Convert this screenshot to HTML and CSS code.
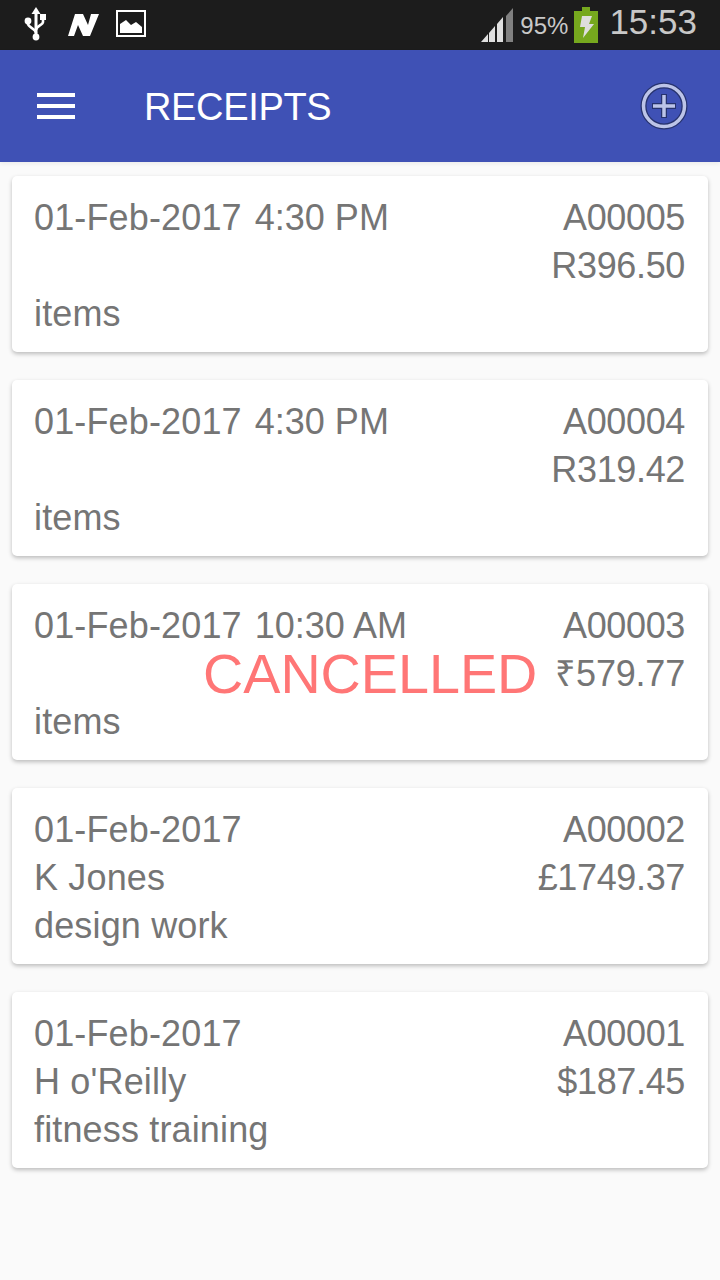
FILE: index.html
```html
<!DOCTYPE html>
<html lang="en">
  <head>
    <meta charset="UTF-8" />
    <meta name="viewport" content="width=device-width, initial-scale=1.0" />
    <title>Receipts</title>
    <link rel="stylesheet" href="styles.css">
  </head>
  <body>
    <div class="status-bar">
      <svg class="icon-usb" width="24" height="36" viewBox="0 0 24 36">
        <path d="M12 30V4" stroke="#fff" stroke-width="3" fill="none"/>
        <path d="M12 0l4.500 7h-9z" fill="#fff"/>
        <path d="M4 14v3c0 3 8 5 8 9M19 10v5c0 3-7 4-7 8" stroke="#fff" stroke-width="2.600" fill="none"/>
        <circle cx="4" cy="14" r="3.400" fill="#fff"/>
        <rect x="16" y="7" width="6" height="6" fill="#fff"/>
        <circle cx="12" cy="30" r="3.400" fill="#fff"/>
      </svg>
      <svg class="icon-n" width="32" height="24" viewBox="0 0 32 24">
        <path d="M7 1h8l5 11 3-11h8l-9 22h-7l-5-11-4 11H0z" fill="#fff"/>
      </svg>
      <svg class="icon-pic" width="31" height="28" viewBox="0 0 31 28">
        <rect x="1" y="1" width="28" height="25" fill="none" stroke="#fff" stroke-width="2"/>
        <path d="M4 23v-9l6-4 5 5 5-3 6 5v6z" fill="#fff"/>
      </svg>
      <div class="status-right">
        <svg class="signal" width="34" height="36" viewBox="0 0 34 36">
          <path d="M1 34l7-8v8z" fill="#e0e0e0"/>
          <path d="M9 25l6-7v16H9z" fill="#e0e0e0"/>
          <path d="M17 16l6-7v25h-6z" fill="#e0e0e0"/>
          <path d="M26 8l7-8v34h-7z" fill="#808080"/>
        </svg>
        <span class="battery-text">95%</span>
        <svg width="24" height="36" viewBox="0 0 24 36">
          <path d="M8 0h8v4h8v32H0V4h8z" fill="#76a81e"/>
          <path d="M8 9h10l-3 8h5L9 31l2-11H6z" fill="#dedede"/>
        </svg>
        <span class="clock">15:53</span>
      </div>
    </div>

    <div class="app-bar">
      <div class="menu-btn">
        <span></span>
        <span></span>
        <span></span>
      </div>
      <h1>RECEIPTS</h1>
      <svg class="add-btn" width="48" height="48" viewBox="0 0 48 48">
        <circle cx="24" cy="24" r="20.500" fill="none" stroke="#27336f" stroke-width="6"/>
        <path d="M24 12v24M12 24h24" stroke="#27336f" stroke-width="6"/>
        <circle cx="24" cy="24" r="20.500" fill="none" stroke="#bcc4e8" stroke-width="3.500"/>
        <path d="M24 13v22M13 24h22" stroke="#bcc4e8" stroke-width="3.500"/>
      </svg>
    </div>

    <div class="list">
      <div class="card">
        <div class="row">
          <span class="date">01-Feb-2017</span>
          <span class="time">4:30 PM</span>
          <span class="right">A00005</span>
        </div>
        <div class="row">
          <span class="right">R396.50</span>
        </div>
        <div class="row">items</div>
      </div>

      <div class="card">
        <div class="row">
          <span class="date">01-Feb-2017</span>
          <span class="time">4:30 PM</span>
          <span class="right">A00004</span>
        </div>
        <div class="row">
          <span class="right">R319.42</span>
        </div>
        <div class="row">items</div>
      </div>

      <div class="card">
        <div class="row">
          <span class="date">01-Feb-2017</span>
          <span class="time">10:30 AM</span>
          <span class="right">A00003</span>
        </div>
        <div class="row">
          <span class="cancelled">CANCELLED</span>
          <span class="amount">₹579.77</span>
        </div>
        <div class="row">items</div>
      </div>

      <div class="card">
        <div class="row">
          <span class="date">01-Feb-2017</span>
          <span class="right">A00002</span>
        </div>
        <div class="row">
          <span>K Jones</span>
          <span class="right">£1749.37</span>
        </div>
        <div class="row">design work</div>
      </div>

      <div class="card">
        <div class="row">
          <span class="date">01-Feb-2017</span>
          <span class="right">A00001</span>
        </div>
        <div class="row">
          <span>H o'Reilly</span>
          <span class="right">$187.45</span>
        </div>
        <div class="row">fitness training</div>
      </div>
    </div>
  </body>
</html>
```

FILE: styles.css
```css
* {
  margin: 0;
  padding: 0;
  box-sizing: border-box;
}

body {
  width: 720px;
  height: 1280px;
  overflow: hidden;
  background: #fafafa;
  font-family: "Liberation Sans", Arial, sans-serif;
}

.status-bar {
  height: 50px;
  background: #1c1c1c;
  display: flex;
  align-items: center;
  padding: 0 23px 0 24px;
}

.icon-usb {
  margin-right: 20px;
}

.icon-n {
  margin-right: 16px;
}

.icon-pic {
  margin-bottom: 3px;
}

.status-right {
  margin-left: auto;
  display: flex;
  align-items: center;
}

.signal {
  margin: 2px 1px 0 -1px;
}

.battery-text {
  font-size: 24px;
  color: #c8c8c8;
  margin: 2px 6px 0 5px;
}

.clock {
  font-size: 35px;
  color: #c8c8c8;
  margin: -7px 0 0 11px;
}

.app-bar {
  height: 112px;
  background: #3f51b5;
  display: flex;
  align-items: center;
  padding: 0 32px 0 37px;
  box-shadow: 0 2px 4px rgba(0, 0, 0, .06);
}

.menu-btn {
  width: 38px;
  height: 26px;
  display: flex;
  flex-direction: column;
  justify-content: space-between;
  margin-right: 69px;
}

.menu-btn span {
  height: 4px;
  background: #fff;
}

h1 {
  font-size: 38px;
  font-weight: normal;
  color: #fff;
  letter-spacing: -.35px;
  margin-top: 2px;
}

.add-btn {
  margin-left: auto;
}

.list {
  padding: 14px 12px 0;
  display: flex;
  flex-direction: column;
  gap: 28px;
}

.card {
  height: 176px;
  background: #fff;
  border-radius: 5px;
  padding: 18px 23px 14px 22px;
  box-shadow: 0 2px 4px rgba(0, 0, 0, .25);
  color: #757575;
  font-size: 36px;
  line-height: 48px;
  letter-spacing: .15px;
}

.row {
  height: 48px;
  display: flex;
  white-space: nowrap;
}

.date {
  margin-right: 13px;
}

.time {
  letter-spacing: 0;
}

.right {
  margin-left: auto;
  letter-spacing: -.35px;
}

.amount {
  letter-spacing: -.2px;
}

.cancelled {
  margin-left: auto;
  font-size: 55.7px;
  letter-spacing: 0;
  color: #ff7676;
  margin-right: 18px;
}
```
